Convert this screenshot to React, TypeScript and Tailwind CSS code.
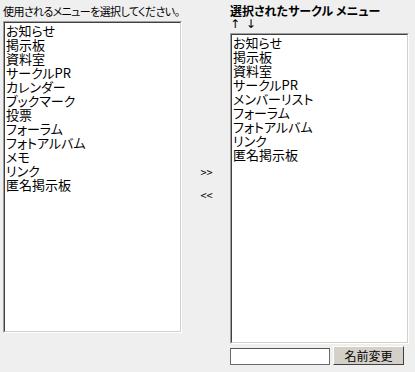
import React from 'react';

const available = [
  'お知らせ',
  '掲示板',
  '資料室',
  'サークルPR',
  'カレンダー',
  'ブックマーク',
  '投票',
  'フォーラム',
  'フォトアルバム',
  'メモ',
  'リンク',
  '匿名掲示板',
];

const selected = [
  'お知らせ',
  '掲示板',
  '資料室',
  'サークルPR',
  'メンバーリスト',
  'フォーラム',
  'フォトアルバム',
  'リンク',
  '匿名掲示板',
];

// classic sunken listbox: two-tone inset border
function ListBox({ items, className }: { items: string[]; className: string }) {
  return (
    <div
      className={`border border-t-[#a0a0a0] border-l-[#a0a0a0] border-b-white border-r-white ${className}`}
    >
      <div className="h-full border border-t-[#404040] border-l-[#404040] border-b-[#d4d0c8] border-r-[#d4d0c8] bg-white px-[1px] pt-[1px]">
        {items.map((it, i) => (
          <div key={i} className="h-[14px] text-[13px] leading-[14px] text-black whitespace-nowrap">
            {it}
          </div>
        ))}
      </div>
    </div>
  );
}

export default function App() {
  return (
    <div
      className="flex h-[372px] w-[415px] bg-[#efefef] text-black [font-feature-settings:'palt'] [font-family:'Noto_Sans_CJK_JP',sans-serif]"
    >
      <div className="w-[182px] shrink-0 pl-[3px]">
        <div className="mt-[4px] h-[17px] whitespace-nowrap text-[11px] leading-[14px] tracking-[-0.6px]">
          使用されるメニューを選択してください。
        </div>
        <ListBox items={available} className="h-[312px] w-[179px]" />
      </div>

      <div className="flex w-[48px] shrink-0 flex-col items-center pt-[165px] text-[11px] leading-[14px]">
        <div className="pl-[1px]">&gt;&gt;</div>
        <div className="mt-[9px] pl-[1px]">&lt;&lt;</div>
      </div>

      <div className="w-[180px] shrink-0">
        <div className="mt-[4px] h-[13px] whitespace-nowrap text-[12px] font-bold leading-[13px]">
          選択されたサークル メニュー
        </div>
        <div className="h-[16px] text-[12px] leading-[14px] tracking-[1px] [font-family:'DejaVu_Sans',sans-serif]">
          ↑ ↓
        </div>
        <ListBox items={selected} className="h-[311px] w-[179px]" />
        <div className="mt-[2px] flex items-end gap-[3px]">
          <input
            type="text"
            className="h-[17px] w-[100px] border border-[#6a6a6a] border-t-[#555] bg-white outline-none"
          />
          <button className="h-[19px] w-[71px] border border-t-white border-l-white border-b-[#404040] border-r-[#404040] bg-[#d4d0c8] text-[12px] leading-[16px] text-black">
            名前変更
          </button>
        </div>
      </div>
    </div>
  );
}
